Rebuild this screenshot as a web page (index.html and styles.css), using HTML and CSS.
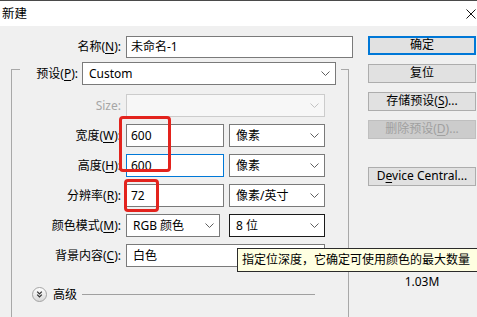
FILE: index.html
```html
<!DOCTYPE html>
<html lang='zh-CN'>
<head>
    <meta charset='UTF-8'>
    <meta name='viewport' content='width=device-width, initial-scale=1.0'>
    <title>新建</title>
    <link rel="stylesheet" href="styles.css">
</head>
<body>
    <div class='titlebar'>
        <span class='title'>新建</span>
        <svg class='close' width='10' height='10' viewBox='0 0 10 10'><path d='M0.5 0.5L9.5 9.5M9.5 0.5L0.5 9.5' stroke='#111' fill='none'/></svg>
    </div>
    <div class='dialog'>
        <div class='form'>
            <div class='row name-row'>
                <label class='lbl'>名称(<u>N</u>):</label>
                <div class='field w-name'>未命名-1</div>
            </div>
            <div class='group'>
                <div class='preset-row'>
                    <label class='preset-lbl'>预设(<u>P</u>):</label>
                    <div class='field select w-preset'><span>Custom</span><svg class='chev' width='9' height='5' viewBox='0 0 9 5'><path d='M0.5 0.5L4.5 4.5L8.5 0.5'/></svg></div>
                </div>
                <div class='row first'>
                    <label class='lbl disabled'>Size:</label>
                    <div class='field select w-full off'><span></span><svg class='chev' width='9' height='5' viewBox='0 0 9 5'><path d='M0.5 0.5L4.5 4.5L8.5 0.5'/></svg></div>
                </div>
                <div class='row'>
                    <label class='lbl'>宽度(<u>W</u>):</label>
                    <div class='field w-num'>600</div>
                    <div class='field select w-unit'><span>像素</span><svg class='chev' width='9' height='5' viewBox='0 0 9 5'><path d='M0.5 0.5L4.5 4.5L8.5 0.5'/></svg></div>
                </div>
                <div class='row'>
                    <label class='lbl'>高度(<u>H</u>):</label>
                    <div class='field w-num focus'>600</div>
                    <div class='field select w-unit'><span>像素</span><svg class='chev' width='9' height='5' viewBox='0 0 9 5'><path d='M0.5 0.5L4.5 4.5L8.5 0.5'/></svg></div>
                </div>
                <div class='row'>
                    <label class='lbl'>分辨率(<u>R</u>):</label>
                    <div class='field w-num'>72</div>
                    <div class='field select w-unit'><span>像素/英寸</span><svg class='chev' width='9' height='5' viewBox='0 0 9 5'><path d='M0.5 0.5L4.5 4.5L8.5 0.5'/></svg></div>
                </div>
                <div class='row'>
                    <label class='lbl'>颜色模式(<u>M</u>):</label>
                    <div class='field select w-mode'><span>RGB 颜色</span><svg class='chev' width='9' height='5' viewBox='0 0 9 5'><path d='M0.5 0.5L4.5 4.5L8.5 0.5'/></svg></div>
                    <div class='field select w-unit dark'><span>8 位</span><svg class='chev' width='9' height='5' viewBox='0 0 9 5'><path d='M0.5 0.5L4.5 4.5L8.5 0.5'/></svg></div>
                </div>
                <div class='row'>
                    <label class='lbl'>背景内容(<u>C</u>):</label>
                    <div class='field select w-full'><span>白色</span><svg class='chev' width='9' height='5' viewBox='0 0 9 5'><path d='M0.5 0.5L4.5 4.5L8.5 0.5'/></svg></div>
                </div>
                <div class='adv-row'>
                    <svg width='15' height='15' viewBox='0 0 15 15'>
                        <defs><linearGradient id='adv' x1='0' y1='0' x2='0' y2='1'><stop offset='0' stop-color='#ffffff'/><stop offset='1' stop-color='#d8d8d8'/></linearGradient></defs>
                        <circle cx='7.5' cy='7.5' r='7' fill='url(#adv)' stroke='#a3a3a3'/>
                        <path d='M5.2 4.6L7.5 6.9L9.8 4.6M5.2 7.6L7.5 9.9L9.8 7.6' fill='none' stroke='#333' stroke-width='1.3'/>
                    </svg>
                    <span class='adv-text'>高级</span>
                    <span class='adv-line'></span>
                </div>
            </div>
        </div>
        <div class='side'>
            <div class='btn default'>确定</div>
            <div class='btn'>复位</div>
            <div class='btn'>存储预设(<u>S</u>)...</div>
            <div class='btn off'>删除预设(<u>D</u>)...</div>
            <div class='btn device'>D<u>e</u>vice Central...</div>
            <div class='imgsize'>1.03M</div>
        </div>
    </div>

    <div class='mark mark-a'></div>
    <div class='mark mark-b'></div>
    <div class='tooltip'>指定位深度，它确定可使用颜色的最大数量</div>
</body>
</html>
```

FILE: styles.css
```css
*{
    box-sizing: border-box;
}
body{
    margin: 0;
    width: 477px;
    height: 317px;
    overflow: hidden;
    position: relative;
    background-color: #f0f0f0;
    font-family: "Noto Sans", "Noto Sans CJK SC", sans-serif;
    font-size: 12px;
    color: #000;
}
u{
    text-decoration-thickness: 1px;
    text-underline-offset: 2px;
}
.titlebar{
    height: 26px;
    background-color: #ffffff;
    border-top: 1px solid #4a4a4a;
    display: flex;
    align-items: center;
    padding-left: 2px;
}
.title{
    font-size: 12.5px;
    line-height: 16px;
}
.close{
    margin-left: auto;
    margin-right: 1px;
}
.dialog{
    display: flex;
    padding-top: 10px;
}
.form{
    width: 349px;
    flex: none;
}
.row{
    display: flex;
    align-items: center;
    height: 23px;
    margin-top: 7px;
}
.name-row{
    margin-top: 0;
    height: 22px;
}
.lbl{
    text-align: right;
    white-space: nowrap;
    line-height: 16px;
    width: 109px;
    margin-right: 5px;
    flex: none;
}
.name-row .lbl{
    width: 121px;
}
.lbl.disabled{
    color: #a6a6a6;
}
.field{
    height: 100%;
    border: 1px solid #7a7a7a;
    background-color: #ffffff;
    padding: 0 4px;
    display: flex;
    align-items: center;
    line-height: 16px;
    white-space: nowrap;
    flex: none;
}
.field.focus{
    border-color: #0078d7;
}
.select{
    padding: 0 5px 0 6px;
}
.select span{
    flex: 1;
}
.select.dark{
    border-color: #1a1a1a;
}
.select.off{
    background-color: #f7f7f7;
    border-color: #cccccc;
}
.chev path{
    fill: none;
    stroke: #5f5f5f;
}
.off .chev path{
    stroke: #c2c2c2;
}
.w-name{
    width: 227px;
}
.w-preset{
    width: 254px;
    height: 23px;
}
.w-full{
    width: 199px;
}
.w-num{
    width: 98px;
}
.w-unit{
    width: 96px;
    margin-left: 5px;
}
.w-mode{
    width: 94px;
}
.w-mode + .w-unit{
    margin-left: 9px;
}
.group{
    margin-left: 11px;
    margin-top: 11px;
    width: 338px;
    height: 260px;
    border: 1px solid #a8a8a8;
    border-bottom: none;
}
.preset-row{
    display: flex;
    align-items: center;
    gap: 4px;
    width: fit-content;
    height: 23px;
    margin-top: -8px;
    margin-left: 8px;
    padding: 0 5px 0 13px;
    background-color: #f0f0f0;
}
.preset-lbl{
    width: 45px;
    text-align: right;
    white-space: nowrap;
    line-height: 16px;
}
.row.first{
    margin-top: 9px;
}
.adv-row{
    display: flex;
    align-items: center;
    height: 15px;
    margin-top: 20px;
    margin-left: 20px;
    width: 283px;
}
.adv-text{
    margin-left: 6px;
    line-height: 16px;
}
.adv-line{
    flex: 1;
    height: 1px;
    margin-left: 5px;
    background-color: #a0a0a0;
}
.side{
    margin-left: 19px;
    width: 108px;
    flex: none;
    display: flex;
    flex-direction: column;
    gap: 9px;
}
.btn{
    height: 19px;
    border: 1px solid #adadad;
    background-color: #e1e1e1;
    text-align: center;
    line-height: 16px;
    white-space: nowrap;
}
.btn.default{
    border: 2px solid #0078d7;
    line-height: 14px;
}
.btn.off{
    color: #a0a0a0;
    background-color: #cccccc;
    border-color: #bfbfbf;
}
.btn.device{
    margin-top: 19px;
}
.imgsize{
    margin-top: 80px;
    text-align: center;
    line-height: 14px;
}
.mark{
    position: absolute;
    border: 3px solid #e3231d;
    border-radius: 4px;
}
.mark-a{
    left: 119px;
    top: 116px;
    width: 52px;
    height: 56px;
}
.mark-b{
    left: 124px;
    top: 179px;
    width: 35px;
    height: 33px;
}
.tooltip{
    position: absolute;
    left: 237px;
    top: 248px;
    width: 250px;
    height: 24px;
    border: 1px solid #2b2b2b;
    background-color: #ffffe1;
    padding-left: 4px;
    line-height: 21px;
    white-space: nowrap;
}
```
